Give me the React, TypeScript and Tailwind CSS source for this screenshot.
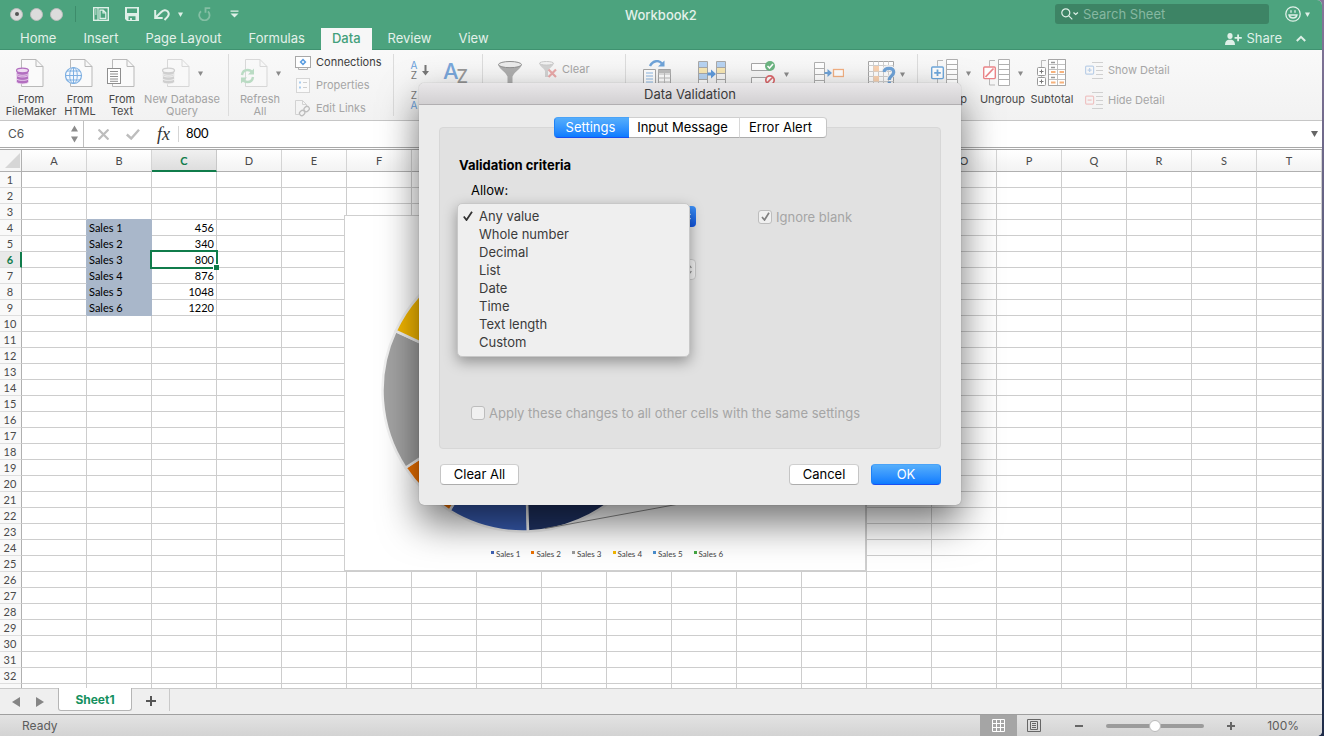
import React, { useState } from 'react';
import clsx from 'clsx';

const COLUMNS = 'ABCDEFGHIJKLMNOPQRST'.split('');
const ROWS = Array.from({ length: 32 }, (_, i) => i + 1);
const SALES: Record<number, number> = { 4: 456, 5: 340, 6: 800, 7: 876, 8: 1048, 9: 1220 };
const CRITERIA = ['Any value', 'Whole number', 'Decimal', 'List', 'Date', 'Time', 'Text length', 'Custom'];

function Caret({ className = 'text-[#8a8a8a]' }: { className?: string }) {
  return (
    <svg width="5" height="5" viewBox="0 0 5 5" className={clsx('shrink-0', className)}>
      <path d="M0 0.5h5L2.5 5z" fill="currentColor" />
    </svg>
  );
}

/* ---------- Title bar ---------- */

function TrafficLight({ dot }: { dot?: boolean }) {
  return (
    <span className="flex size-[13px] items-center justify-center rounded-full border border-[#bcbcbc] bg-[#dcdcdc]">
      {dot && <span className="size-1 rounded-full bg-[#555]" />}
    </span>
  );
}

function TitleBar() {
  return (
    <div className="grid h-7 grid-cols-[1fr_auto_1fr] items-center">
      <div className="flex items-center pl-[10px]">
        <div className="flex gap-[7px]">
          <TrafficLight dot />
          <TrafficLight />
          <TrafficLight />
        </div>
        <span className="ml-3 h-4 w-px bg-[#3d8c6b]" />
        <div className="ml-[17px] flex items-center text-[#dff0e8]">
          <button aria-label="Gallery">
            <svg width="16" height="14" viewBox="0 0 16 14" fill="none" stroke="currentColor" strokeWidth="1.4">
              <rect x="0.7" y="0.7" width="14.6" height="12.6" />
              <path d="M5 1v12M2 3h1.6M2 5h1.6M2 7h1.6" strokeWidth="1.1" />
              <path d="M7 3.2h3.2l2.6 2.6v5.5H7zM10 3.2v2.8h2.8" strokeWidth="1.2" />
            </svg>
          </button>
          <button aria-label="Save" className="ml-4">
            <svg width="14" height="14" viewBox="0 0 14 14">
              <path d="M0 0h14v14H2l-2-2zM2 1.5V6h10V1.5zM3.5 9.3V13h1.6v-2h1.8v2h3.6V9.3z" fill="currentColor" fillRule="evenodd" />
            </svg>
          </button>
          <button aria-label="Undo" className="ml-[15px]">
            <svg width="16" height="13" viewBox="0 0 16 13" fill="none" stroke="currentColor" strokeWidth="2">
              <path d="M1.200 2v8h7.500M1.800 9.400L7 4.200C9.300 1.800 12 1.600 13.700 3.400c1.600 2 1 4.400-.7 6L10.500 12" />
            </svg>
          </button>
          <span className="ml-2"><Caret className="text-[#dff0e8]" /></span>
          <button aria-label="Redo" className="ml-[15px] text-[#84bfa4]">
            <svg width="13" height="14" viewBox="0 0 13 14" fill="none" stroke="currentColor" strokeWidth="1.8">
              <path d="M3 4.200A5.200 5.200 0 1 0 10 4.400M7.500 5.800V1.200h4.700" />
            </svg>
          </button>
          <button aria-label="Customize toolbar" className="ml-[19px]">
            <svg width="9" height="8" viewBox="0 0 9 8" fill="currentColor">
              <path d="M0.5 0.5h8v1.3h-8zM0.5 3.500h8L4.500 7.500z" />
            </svg>
          </button>
        </div>
      </div>
      <h1 className="pt-1 text-[13px] font-medium text-[#e3f1ea]">Workbook2</h1>
      <div className="flex items-center justify-end pr-3">
        <label className="flex h-5 w-[214px] items-center rounded-[3px] bg-[#3d8465] pl-[6px] text-[#dff0e8]">
          <svg width="18" height="12" viewBox="0 0 18 12" fill="none" stroke="currentColor" strokeWidth="1.2" className="shrink-0">
            <circle cx="4.8" cy="4.8" r="4" />
            <path d="M7.8 7.8l3.5 3.5M12.5 4.5l2.200 2 2.200-2" />
          </svg>
          <input
            aria-label="Search Sheet"
            placeholder="Search Sheet"
            className="ml-1 w-full bg-transparent pt-[2px] text-[13px] outline-none placeholder:text-[#86b8a1]"
          />
        </label>
        <button aria-label="Feedback" className="ml-4 flex items-center gap-1 text-[#dff0e8]">
          <svg width="16" height="16" viewBox="0 0 16 16" fill="none" stroke="currentColor" strokeWidth="1.3">
            <circle cx="8" cy="8" r="7.2" />
            <path d="M4 9c.4 2 2 3 4 3s3.600-1 4-3zM6 4.200v2.600M10 4.200v2.600" />
          </svg>
          <Caret className="text-[#dff0e8]" />
        </button>
      </div>
    </div>
  );
}

function RibbonTabs() {
  return (
    <div className="flex h-[22px] items-center justify-between border-b border-[#3f9270] pr-4 pl-[7px]">
      <nav className="flex h-[22px] gap-px text-[13px] text-[#e3f1ea]">
        {['Home', 'Insert', 'Page Layout', 'Formulas', 'Data', 'Review', 'View'].map((tab) => (
          <button
            key={tab}
            className={clsx(
              'h-[22px]',
              tab === 'Data' ? 'mx-[2px] bg-[#f7f7f7] px-[11px] font-medium text-[#43a07b]' : 'px-[13px]',
            )}
          >
            {tab}
          </button>
        ))}
      </nav>
      <div className="flex items-center text-[#dff0e8]">
        <button className="flex items-center gap-1 text-[13px]">
          <svg width="17" height="12" viewBox="0 0 17 12" fill="currentColor">
            <ellipse cx="5" cy="3" rx="2.600" ry="3" />
            <path d="M0 12c0-3.500 1.500-4.800 3.500-5.200h3c2 .4 3.500 1.700 3.500 5.200zM12.200 1.500h1.800V4h2.800v1.700H14v2.600h-1.800V5.700H9.600V4h2.600z" />
          </svg>
          Share
        </button>
        <button aria-label="Collapse ribbon" className="ml-[14px]">
          <svg width="10" height="7" viewBox="0 0 10 7" fill="none" stroke="currentColor" strokeWidth="2">
            <path d="M0.800 6L5 1.800 9.200 6" />
          </svg>
        </button>
      </div>
    </div>
  );
}

/* ---------- Ribbon icons ---------- */

function Page() {
  return <path d="M5.500 .5H20l7 7v20H5.500zM20 .5v7h7" fill="#fafafa" stroke="#b9b9b9" />;
}

function Database({ color, edge }: { color: string; edge: string }) {
  return (
    <g fill={color} stroke={edge} strokeWidth="0.900">
      {[20, 16.500, 13].map((y) => (
        <path key={y} d={`M.5 ${y}v2.600c0 1.500 2.600 2.300 6 2.300s6-.8 6-2.300V${y}z`} />
      ))}
      <path d="M.5 12v2c0 1.400 2.600 2.300 6 2.300s6-.9 6-2.300v-2z" />
      <ellipse cx="6.500" cy="11.500" rx="6" ry="2.300" stroke={color} fill={edge} strokeWidth="1.300" />
    </g>
  );
}

function FileMakerIcon() {
  return (
    <svg width="28" height="28" viewBox="0 0 28 28" fill="none">
      <Page />
      <Database color="#b36fc0" edge="#efdcf2" />
    </svg>
  );
}

function HtmlIcon() {
  return (
    <svg width="28" height="28" viewBox="0 0 28 28" fill="none">
      <Page />
      <circle cx="8.500" cy="16.500" r="8" fill="#f4f8fd" stroke="#7fb0e2" strokeWidth="1.200" />
      <ellipse cx="8.500" cy="16.500" rx="3.800" ry="8" stroke="#7fb0e2" />
      <path d="M8.500 8.500v16M.5 16.500h16M2 12h13M2 21h13" stroke="#7fb0e2" />
    </svg>
  );
}

function TextIcon() {
  return (
    <svg width="28" height="28" viewBox="0 0 28 28" fill="none">
      <Page />
      <rect x=".5" y="9.500" width="13" height="15" fill="#fff" stroke="#8e8e8e" />
      <path d="M3 12.500h8M3 15h8M3 17.500h8M3 20h8M3 22.300h8" stroke="#8e8e8e" />
    </svg>
  );
}

function QueryIcon() {
  return (
    <svg width="28" height="28" viewBox="0 0 28 28" fill="none" opacity=".5">
      <Page />
      <Database color="#a9a9a9" edge="#f4f4f4" />
    </svg>
  );
}

function RefreshIcon() {
  return (
    <svg width="28" height="28" viewBox="0 0 28 28" fill="none" opacity=".5">
      <Page />
      <path d="M2 16c.5-3.500 3-5 5.500-5 2 0 3.800.8 5 2.500M13 18c-.5 3.500-3 5-5.500 5-2 0-3.800-.8-5-2.500" stroke="#7fc292" strokeWidth="2.400" />
      <path d="M14 9.500v6H8zM1 24.500v-6h6z" fill="#7fc292" />
    </svg>
  );
}

function ConnectionsIcon() {
  return (
    <svg width="16" height="14" viewBox="0 0 16 14" fill="none">
      <path d="M3.500 11.500v2h9v-2" stroke="#b0b0b0" />
      <rect x=".5" y=".5" width="15" height="11" fill="#fff" stroke="#a8a8a8" />
      <rect x="6.300" y="4.300" width="3.400" height="3.400" transform="rotate(45 8 6)" stroke="#5a9de0" strokeWidth="1.500" />
    </svg>
  );
}

function PropertiesIcon() {
  return (
    <svg width="14" height="15" viewBox="0 0 14 15" fill="none">
      <rect x=".5" y=".5" width="13" height="14" fill="#fafafa" stroke="#d6d6d6" />
      <path d="M3 4.500h2M3 9.500h2" stroke="#a9cdf0" strokeWidth="2" />
      <path d="M7 4.500h4M7 9.500h4" stroke="#cfcfcf" />
    </svg>
  );
}

function EditLinksIcon() {
  return (
    <svg width="16" height="17" viewBox="0 0 16 17" fill="none">
      <path d="M4 14.500H.5V.5h7l4 4V6M7.500.5v4h4" stroke="#d2d2d2" />
      <rect x="9.500" y="6.500" width="4.500" height="5.500" rx="2.200" transform="rotate(45 12 9)" stroke="#bdbdbd" strokeWidth="1.300" />
      <rect x="5" y="10.500" width="4.500" height="5.500" rx="2.200" transform="rotate(45 7.500 13)" stroke="#bdbdbd" strokeWidth="1.300" />
    </svg>
  );
}

function FunnelIcon() {
  return (
    <svg width="24" height="28" viewBox="0 0 24 28">
      <path d="M0 3.500C2 9 7 10 9.500 15.500V28h5V15.500C17 10 22 9 24 3.500z" fill="#aeaeae" />
      <ellipse cx="12" cy="3.600" rx="11.500" ry="3.100" fill="#ececec" stroke="#8f8f8f" />
    </svg>
  );
}

function ClearIcon() {
  return (
    <svg width="18" height="17" viewBox="0 0 18 17">
      <path d="M0 2C1 6 4.500 6.500 6 10v6h3v-6c1.500-3.500 5-4 6-8z" fill="#d3d3d3" />
      <ellipse cx="7.500" cy="2.300" rx="7" ry="1.800" fill="#f2f2f2" stroke="#cacaca" />
      <path d="M9.500 8.500l7.500 7.500M17 8.500L9.500 16" stroke="#eaa9a9" strokeWidth="2.200" />
    </svg>
  );
}

function TextToColumnsIcon() {
  return (
    <svg width="28" height="30" viewBox="0 0 28 30" fill="none">
      <path d="M7 6C10 0 16 0 19 3.500" stroke="#6fa3d8" strokeWidth="2.400" />
      <path d="M21.500.5v6h-6.500z" fill="#6fa3d8" />
      <path d="M.5 9.500h12v20H.5z" fill="#fff" stroke="#a6a6a6" />
      <path d="M3 13h7M3 16h7M3 19h7M3 22h7" stroke="#8db9e6" />
      <path d="M15.500 9.500h12v20h-12z" fill="#fff" stroke="#a6a6a6" />
      <path d="M15.500 10h12v3h-12z" fill="#bdbdbd" />
      <path d="M21.500 10v20M15.500 14h12M15.500 18h12M15.500 22h12" stroke="#bdbdbd" />
    </svg>
  );
}

function RemoveDuplicatesIcon() {
  return (
    <svg width="28" height="28" viewBox="0 0 28 28" fill="none">
      <path d="M.5.5h9v27h-9z" fill="#fff" />
      <path d="M1 1h8.500v6H1zM1 13h8.500v6H1z" fill="#b7d3f2" />
      <path d="M1 7h8.500v6H1zM18.500 7h9v6h-9z" fill="#f8e8b4" />
      <path d="M18.500 1h9v6h-9z" fill="#b7d3f2" />
      <path d="M.5.5h9v27h-9zM18.500.5h9v27h-9zM.5 6.500h9M.5 12.500h9M.5 18.500h9M18.500 6.500h9M18.500 12.500h9M18.500 18.500h9" stroke="#a9a9a9" />
      <path d="M9.500 11.500h3.500v-3l5 4.500-5 4.500v-3H9.500z" fill="#5f9bdc" />
    </svg>
  );
}

function ValidationIcon() {
  return (
    <svg width="25" height="28" viewBox="0 0 25 28" fill="none">
      <path d="M.5 3.500h18v7H.5zM.5 17.500h18v7H.5z" fill="#fff" stroke="#a6a6a6" />
      <circle cx="19" cy="6" r="5" fill="#6cb582" />
      <path d="M16.500 6l2 2 3.500-4" stroke="#fff" strokeWidth="1.600" />
      <circle cx="19" cy="20" r="4.200" fill="#fff" stroke="#dd6a6e" strokeWidth="1.700" />
      <path d="M16 23l6-6" stroke="#dd6a6e" strokeWidth="1.700" />
    </svg>
  );
}

function ConsolidateIcon() {
  return (
    <svg width="30" height="28" viewBox="0 0 30 28" fill="none">
      <path d="M.5 2.500h10v25H.5zM.5 8.500h10M.5 14.500h10M.5 20.500h10" fill="#fff" stroke="#b0b0b0" />
      <path d="M10.500 12h3V9l4.500 4-4.500 4v-3h-3z" fill="#6fa3d8" />
      <rect x="19.500" y="9.500" width="10" height="7" fill="#fff" stroke="#f4b183" strokeWidth="1.300" />
    </svg>
  );
}

function WhatIfIcon() {
  return (
    <svg width="28" height="28" viewBox="0 0 28 28" fill="none">
      <path d="M.5 1.500h25v26H.5z" fill="#fff" stroke="#a6a6a6" />
      <path d="M.5 5.500h25M.5 11.500h25M.5 16.500h25M.5 21.500h25M5.500 1.500v26M10.500 1.500v26M15.500 1.500v26M20.500 1.500v26" stroke="#d0d0d0" />
      <path d="M5.500 6h5.500v5.500H5.500zM5.500 16h5.500v5.500H5.500z" fill="#fbd3b2" />
      <path d="M16 11.500C16.500 8.500 19 7.800 21 7.800c3 0 4.700 1.700 4.700 4 0 3.600-4.400 3.600-4.400 7.200v1" stroke="#f4f4f4" strokeWidth="5" />
      <path d="M16 12C16.500 9 19 8.300 21 8.300c3 0 4.700 1.700 4.700 4 0 3.600-4.400 3.600-4.400 7v.7M21.300 21.500v3" stroke="#6fa3d8" strokeWidth="3.200" />
    </svg>
  );
}

function GroupIcon({ ungroup }: { ungroup?: boolean }) {
  return (
    <svg width="27" height="28" viewBox="0 0 27 28" fill="none">
      <path d="M12 1.500H6.500v6M6.500 20v6H12" stroke="#b9b9b9" />
      <path d="M15.500.5h11v26h-11zM15.500 5.500h11M15.500 10.500h11M15.500 15.500h11M15.500 20.500h11" fill="#fff" stroke="#b0b0b0" />
      <rect x=".7" y="8" width="11.600" height="11.600" rx="1" fill="#fff" stroke={ungroup ? '#ea8488' : '#6fa8dc'} strokeWidth="1.400" />
      <path d={ungroup ? 'M2.500 18l8-8.500' : 'M6.500 10.500v6.600M3.200 13.800h6.600'} stroke={ungroup ? '#ea8488' : '#6fa8dc'} strokeWidth="1.800" />
    </svg>
  );
}

function SubtotalIcon() {
  return (
    <svg width="29" height="28" viewBox="0 0 29 28" fill="none">
      <path d="M9 1.500H4.500V8M4.500 17v1" stroke="#b9b9b9" />
      <path d="M11.500.5h17v26h-17zM11.500 5.500h17M11.500 10.500h17M11.500 15.500h17M11.500 20.500h17M20.500.5v26" fill="#fff" stroke="#c0c0c0" />
      <path d="M11.500.5h17v26h-17z" stroke="#a6a6a6" />
      <path d="M14 3.500h4M14 8.500h4M14 18.500h4" stroke="#999" strokeWidth="1.400" />
      <path d="M14 13h4.500M22.500 13H27M14 23.500h4.500M22.500 23.500H27" stroke="#f6b27c" strokeWidth="2.200" />
      <rect x=".5" y="8.500" width="8" height="8" rx="1" fill="#fff" stroke="#999" />
      <rect x=".5" y="18.500" width="8" height="8" rx="1" fill="#fff" stroke="#999" />
      <path d="M2.500 12.500h4M4.500 10.500v4M2.500 22.500h4M4.500 20.500v4" stroke="#777" />
    </svg>
  );
}

function DetailIcon({ hide }: { hide?: boolean }) {
  const color = hide ? '#efc3c3' : '#bcd0e8';
  return (
    <svg width="18" height="17" viewBox="0 0 18 17" fill="none">
      <path d="M7 .5h11M11 4.500h7M11 8.500h7M11 12.500h7M7 16.500h11" stroke="#d0d0d0" />
      <rect x=".6" y="4.100" width="8" height="8" rx="1" stroke={color} strokeWidth="1.200" />
      <path d={hide ? 'M2.600 8.100h4' : 'M2.600 8.100h4M4.600 6.100v4'} stroke={color} strokeWidth="1.300" />
    </svg>
  );
}

/* ---------- Ribbon ---------- */

function BigButton({
  icon, label, caret, muted, className,
}: { icon: React.ReactNode; label?: string; caret?: boolean; muted?: boolean; className: string }) {
  return (
    <button className={clsx('flex shrink-0 flex-col items-center text-[11px] leading-3', muted ? 'text-[#a3a3a3]' : 'text-[#484848]', className)}>
      <span className={clsx('flex h-[30px] items-center gap-2', !caret && 'pr-[2px]')}>
        {icon}
        {caret && <Caret />}
      </span>
      <span className="mt-[5px] whitespace-pre-line">{label}</span>
    </button>
  );
}

function SmallButton({ icon, label, muted }: { icon: React.ReactNode; label: string; muted?: boolean }) {
  return (
    <button className={clsx('flex h-[17px] items-center gap-[5px] text-[11px]', muted ? 'text-[#a6a6a6]' : 'text-[#3c3c3c]')}>
      <span className="flex min-w-4 justify-center">{icon}</span>
      {label}
    </button>
  );
}

function Separator() {
  return <span className="h-[62px] w-px shrink-0 bg-[#dcdcdc]" />;
}

function SortButton({ first, second }: { first: string; second: string }) {
  const tone = (c: string) => (c === 'A' ? 'text-[#6a9fdb]' : 'text-[#777]');
  return (
    <button className="flex items-center gap-1" aria-label={`Sort ${first} to ${second}`}>
      <span className="flex w-2 flex-col text-[10px] leading-[10px]">
        <span className={tone(first)}>{first}</span>
        <span className={tone(second)}>{second}</span>
      </span>
      <svg width="7" height="11" viewBox="0 0 7 11" fill="#777">
        <path d="M2.500 0h2v6H7l-3.500 4.500L0 6h2.500z" />
      </svg>
    </button>
  );
}

function Ribbon() {
  return (
    <div className="flex h-[71px] items-start overflow-hidden border-b border-[#c6c6c6] bg-linear-to-b from-[#f9f9f9] to-[#f2f2f2] pt-1">
      <div className="flex shrink-0 pt-1 pr-1 pl-[6px]">
        <BigButton className="w-[50px]" icon={<FileMakerIcon />} label={'From\nFileMaker'} />
        <BigButton className="w-12" icon={<HtmlIcon />} label={'From\nHTML'} />
        <BigButton className="w-9" icon={<TextIcon />} label={'From\nText'} />
        <BigButton className="w-[84px]" icon={<QueryIcon />} label={'New Database\nQuery'} caret muted />
      </div>
      <Separator />
      <div className="flex w-[164px] shrink-0">
        <div className="pt-1">
          <BigButton className="w-[62px]" icon={<RefreshIcon />} label={'Refresh\nAll'} caret muted />
        </div>
        <div className="ml-1 flex flex-col gap-[6px]">
          <SmallButton icon={<ConnectionsIcon />} label="Connections" />
          <SmallButton icon={<PropertiesIcon />} label="Properties" muted />
          <SmallButton icon={<EditLinksIcon />} label="Edit Links" muted />
        </div>
      </div>
      <Separator />
      <div className="flex w-[88px] shrink-0 pt-[6px] pl-4">
        <div className="flex flex-col gap-[10px]">
          <SortButton first="A" second="Z" />
          <SortButton first="Z" second="A" />
        </div>
        <button aria-label="Sort" className="ml-[14px] flex h-7 items-start text-[22px] leading-[22px] font-medium">
          <span className="text-[#7aa7db]">A</span>
          <span className="-ml-[2px] pt-2 text-lg leading-[18px] text-[#999]">Z</span>
        </button>
      </div>
      <Separator />
      <div className="flex w-[142px] shrink-0 items-start pt-[7px] pl-[15px]">
        <button aria-label="Filter"><FunnelIcon /></button>
        <button className="ml-[17px] flex items-center gap-[5px] text-[11px] text-[#a6a6a6]">
          <ClearIcon />
          Clear
        </button>
      </div>
      <Separator />
      <div className="flex w-[291px] shrink-0 items-start pt-[6px] pl-[17px]">
        <button aria-label="Text to Columns" className="w-[55px]"><TextToColumnsIcon /></button>
        <button aria-label="Remove Duplicates" className="w-[53px] pt-px"><RemoveDuplicatesIcon /></button>
        <button aria-label="Data Validation" className="flex w-[63px] items-center gap-2"><ValidationIcon /><Caret /></button>
        <button aria-label="Consolidate" className="w-[54px]"><ConsolidateIcon /></button>
        <button aria-label="What-If Analysis" className="flex items-center gap-1"><WhatIfIcon /><Caret /></button>
      </div>
      <Separator />
      <div className="flex shrink-0 pt-1 pl-[6px]">
        <BigButton className="w-[54px]" icon={<GroupIcon />} label="Group" caret />
        <BigButton className="w-[49px]" icon={<GroupIcon ungroup />} label="Ungroup" caret />
        <BigButton className="w-[50px]" icon={<SubtotalIcon />} label="Subtotal" />
        <div className="ml-2 flex flex-col gap-[13px] pt-1">
          <SmallButton icon={<DetailIcon />} label="Show Detail" muted />
          <SmallButton icon={<DetailIcon hide />} label="Hide Detail" muted />
        </div>
      </div>
    </div>
  );
}

/* ---------- Formula bar ---------- */

function FormulaBar() {
  return (
    <div className="flex h-[29px] items-start border-b border-[#a9a9a9] bg-white">
      <div className="flex h-[27px] w-full items-center border-b border-[#a9a9a9]">
        <div className="flex h-full w-[84px] items-center justify-between border-r border-[#c0c0c0] pr-[5px] pl-2">
          <input aria-label="Name box" defaultValue="C6" className="w-12 bg-transparent text-xs text-[#555] outline-none" />
          <svg width="7" height="18" viewBox="0 0 7 18" fill="#8c8c8c">
            <path d="M0 6.500h7L3.500.5zM0 11.500h7L3.500 17.500z" />
          </svg>
        </div>
        <button aria-label="Cancel entry" className="ml-[14px]">
          <svg width="11" height="11" viewBox="0 0 11 11" stroke="#bdbdbd" strokeWidth="2.200"><path d="M.5.5l10 10M10.500.5l-10 10" /></svg>
        </button>
        <button aria-label="Confirm entry" className="ml-[17px]">
          <svg width="14" height="11" viewBox="0 0 14 11" fill="none" stroke="#bdbdbd" strokeWidth="2.400"><path d="M.8 5.500l4.400 4L13 .8" /></svg>
        </button>
        <button aria-label="Insert function" className="ml-[17px] flex w-[22px] border-r border-[#d5d5d5] font-['Liberation_Serif',serif] text-lg leading-4 text-[#333] italic">
          fx
        </button>
        <input aria-label="Formula" defaultValue="800" className="ml-[7px] flex-1 bg-transparent font-[Lato,sans-serif] text-[13px] text-black outline-none" />
        <button aria-label="Expand formula bar" className="mr-[4px]">
          <svg width="7" height="6" viewBox="0 0 7 6" fill="#666"><path d="M0 0h7L3.500 6z" /></svg>
        </button>
      </div>
    </div>
  );
}

/* ---------- Sheet ---------- */

function Cell({ column, row }: { column: string; row: number }) {
  const inSales = row in SALES;
  const filled = column === 'B' && inSales;
  const active = column === 'C' && row === 6;
  return (
    <td
      className={clsx(
        'border-r border-b p-0 text-black',
        filled && 'border-[#a9b7ca] bg-[#a9b7ca] pl-[2px] text-left',
        column === 'A' && inSales && 'border-r-[#a9b7ca] border-b-[#cdcdcd]',
        column === 'B' && row === 3 && 'border-r-[#cdcdcd] border-b-[#a9b7ca]',
        !filled && !(column === 'A' && inSales) && !(column === 'B' && row === 3) && 'border-[#cdcdcd]',
        column === 'C' && 'pr-[2px] text-right',
        active && 'relative',
      )}
    >
      {filled && `Sales ${row - 3}`}
      {column === 'C' && SALES[row]}
      {active && (
        <span className="pointer-events-none absolute -inset-[2px] border-2 border-[#107c4b]">
          <span className="absolute -right-[3px] -bottom-[3px] size-[6px] border-t border-l border-white bg-[#107c4b]" />
        </span>
      )}
    </td>
  );
}

function Grid() {
  return (
    <table className="w-full table-fixed border-separate border-spacing-0 font-[Lato,sans-serif] text-[11px] leading-[15px]">
      <colgroup>
        <col className="w-[22px]" />
        {COLUMNS.map((c) => <col key={c} />)}
      </colgroup>
      <thead>
        <tr className="h-[22px]">
          <th className="border-r border-b border-[#b0b0b0] bg-[#f6f6f6] p-0">
            <svg width="16" height="15" viewBox="0 0 16 15" className="ml-auto"><path d="M15 0v15H0z" fill="#d6d6d6" /></svg>
          </th>
          {COLUMNS.map((c) => (
            <th
              key={c}
              scope="col"
              className={clsx(
                'border-r p-0',
                c === 'C'
                  ? 'border-b-2 border-r-[#c8c8c8] border-b-[#107c4b] bg-linear-to-b from-[#f0f0f0] to-[#dedede] font-bold text-[#107c4b]'
                  : 'border-b border-r-[#d4d4d4] border-b-[#b0b0b0] bg-linear-to-b from-white to-[#f3f3f3] font-normal text-[#4a4a4a]',
              )}
            >
              {c}
            </th>
          ))}
        </tr>
      </thead>
      <tbody>
        {ROWS.map((row) => (
          <tr key={row} className="h-4">
            <th
              scope="row"
              className={clsx(
                'border-b border-b-[#dedede] p-0',
                row === 6
                  ? 'border-r-2 border-r-[#107c4b] bg-[#e9e9e9] font-bold text-[#107c4b]'
                  : 'border-r border-r-[#b0b0b0] bg-[#f9f9f9] pr-px font-normal text-[#4a4a4a]',
              )}
            >
              {row}
            </th>
            {COLUMNS.map((c) => <Cell key={c} column={c} row={row} />)}
          </tr>
        ))}
        <tr className="h-4">
          <td className="border-r border-r-[#b0b0b0] bg-[#f9f9f9] p-0" />
          {COLUMNS.map((c) => <td key={c} className="border-r border-[#cdcdcd] p-0" />)}
        </tr>
      </tbody>
    </table>
  );
}

function SalesChart() {
  const legend = [
    ['Sales 1', 'bg-[#3f62b5]'],
    ['Sales 2', 'bg-[#ed7100]'],
    ['Sales 3', 'bg-[#9b9b9b]'],
    ['Sales 4', 'bg-[#f5b800]'],
    ['Sales 5', 'bg-[#4a8fd0]'],
    ['Sales 6', 'bg-[#44a843]'],
  ];
  return (
    <figure className="absolute top-[65px] left-[344px] flex h-[356px] w-[522px] flex-col justify-between border border-[#cfcfcf] bg-white">
      <svg width="520" height="324" viewBox="345 216 520 324" className="block">
        <g stroke="#f1f1f1" strokeWidth="2.500" strokeLinejoin="round">
          <path d="M523.500 390.500L449.500 510.500A141 141 0 0 0 528 531.400z" fill="#3659ad" />
          <path d="M523.500 390.500L528 531.400A141 141 0 0 0 664.500 390.500z" fill="#1f3263" />
          <path d="M523.500 390.500L405.500 467.700A141 141 0 0 0 449.500 510.500z" fill="#ed7100" />
          <path d="M523.500 390.500L395.700 331A141 141 0 0 0 405.500 467.700z" fill="#a3a3a3" />
          <path d="M523.500 390.500L523.500 249.500A141 141 0 0 0 395.700 331z" fill="#f5b800" />
          <path d="M523.500 390.500L664.500 390.500A141 141 0 0 0 523.500 249.500z" fill="#4a8fd0" />
        </g>
        <path d="M545 528.500L690 502" stroke="#8a8a8a" fill="none" />
      </svg>
      <figcaption className="mb-[11px] flex items-center justify-center gap-[11px] pl-1 font-[Lato,sans-serif] text-[8px] leading-[10px] text-[#444]">
        {legend.map(([name, color]) => (
          <span key={name} className="flex gap-[2px]">
            <span className={clsx('mt-[2px] size-[3px]', color)} />
            {name}
          </span>
        ))}
      </figcaption>
    </figure>
  );
}

/* ---------- Footer ---------- */

function SheetTabs() {
  return (
    <div className="flex h-[26px] shrink-0 items-start border-t border-[#c9c9c9] bg-[#efefef]">
      <div className="flex h-[26px] items-center gap-4 pl-3">
        <button aria-label="Previous sheet"><svg width="8" height="10" viewBox="0 0 8 10" fill="#858585"><path d="M8 0v10L0 5z" /></svg></button>
        <button aria-label="Next sheet"><svg width="8" height="10" viewBox="0 0 8 10" fill="#858585"><path d="M0 0v10l8-5z" /></svg></button>
      </div>
      <button className="-mt-px ml-[14px] h-[23px] w-[74px] rounded-b-[3px] border border-t-0 border-[#b5b5b5] bg-white pt-[2px] text-xs font-bold text-[#159160]">
        Sheet1
      </button>
      <button aria-label="Add sheet" className="flex h-[22px] w-[38px] items-center justify-center border-r border-[#c9c9c9] pt-[2px]">
        <svg width="10" height="10" viewBox="0 0 10 10" stroke="#555" strokeWidth="2"><path d="M5 0v10M0 5h10" /></svg>
      </button>
    </div>
  );
}

function StatusBar() {
  return (
    <div className="flex h-[22px] shrink-0 items-center justify-between border-t border-[#9f9f9f] bg-linear-to-b from-[#e3e3e3] to-[#d3d3d3] pl-[22px] text-xs text-[#5c5c5c]">
      <span className="pt-px">Ready</span>
      <div className="flex items-center pr-[23px]">
        <button aria-label="Normal view" className="flex h-[21px] w-[37px] items-center justify-center bg-[#a5a5a5]">
          <svg width="13" height="13" viewBox="0 0 13 13" fill="none" stroke="#fff"><path d="M.5.5h12v12H.5zM.5 4.500h12M.5 8.500h12M4.500.5v12M8.500.5v12" /></svg>
        </button>
        <button aria-label="Page layout view" className="ml-[10px]">
          <svg width="14" height="13" viewBox="0 0 14 13" fill="none" stroke="#666"><path d="M.5.5h13v12H.5zM3.500 2.500h7v8h-7zM5 4.500h4M5 6.500h4M5 8.500h4" /></svg>
        </button>
        <button aria-label="Zoom out" className="ml-[34px]">
          <svg width="8" height="8" viewBox="0 0 8 8" stroke="#666" strokeWidth="2"><path d="M0 4h8" /></svg>
        </button>
        <input
          type="range"
          aria-label="Zoom"
          defaultValue={50}
          className="ml-[23px] h-1 w-[98px] appearance-none rounded-full bg-[#9b9b9b] [&::-webkit-slider-thumb]:size-3 [&::-webkit-slider-thumb]:appearance-none [&::-webkit-slider-thumb]:rounded-full [&::-webkit-slider-thumb]:border [&::-webkit-slider-thumb]:border-[#bbb] [&::-webkit-slider-thumb]:bg-white"
        />
        <button aria-label="Zoom in" className="ml-[23px]">
          <svg width="8" height="8" viewBox="0 0 8 8" stroke="#666" strokeWidth="2"><path d="M0 4h8M4 0v8" /></svg>
        </button>
        <span className="w-16 pt-px text-right">100%</span>
      </div>
    </div>
  );
}

/* ---------- Dialog ---------- */

function PushButton({ children, primary, className }: { children: React.ReactNode; primary?: boolean; className: string }) {
  return (
    <button
      className={clsx(
        'h-[21px] rounded-[4px] border text-[13px] leading-[19px]',
        primary
          ? 'border-t-[#4aa3f8] border-r-[#1f82f6] border-b-[#1a4ff0] border-l-[#1f82f6] bg-linear-to-b from-[#55aefb] to-[#0a7bff] text-white'
          : 'border-t-[#cfcfcf] border-r-[#c5c5c5] border-b-[#adadad] border-l-[#c5c5c5] bg-white text-black',
        className,
      )}
    >
      {children}
    </button>
  );
}

function UpDown() {
  return (
    <svg width="6" height="11" viewBox="0 0 6 11" fill="none" stroke="currentColor" strokeWidth="1.300">
      <path d="M.6 3.800L3 1l2.400 2.800M.6 7.200L3 10l2.400-2.800" />
    </svg>
  );
}

function Segments() {
  return (
    <div className="flex h-[21px] self-center text-[13px] leading-[19px]">
      <button className="w-[75px] rounded-l-[4px] border border-t-[#4aa3f8] border-r-0 border-b-[#1a4ff0] border-l-[#1f82f6] bg-linear-to-b from-[#55aefb] to-[#0a7bff] pr-[2px] text-white">Settings</button>
      <button className="w-[111px] border-y border-r border-t-[#cfcfcf] border-r-[#d8d8d8] border-b-[#adadad] bg-white pr-[2px] text-black">Input Message</button>
      <button className="w-[87px] rounded-r-[4px] border border-l-0 border-t-[#cfcfcf] border-r-[#c5c5c5] border-b-[#adadad] bg-white pr-1 text-black">Error Alert</button>
    </div>
  );
}

function CheckBox({ label, checked }: { label: string; checked?: boolean }) {
  return (
    <label className="flex items-center gap-1 text-[13px] leading-4 text-[#a5a5a5]">
      <span className="grid size-[14px] place-items-center">
        <input type="checkbox" disabled defaultChecked={checked} className="col-start-1 row-start-1 size-[14px] appearance-none rounded-[3px] border border-[#bdbdbd] bg-[#f0f0f0]" />
        {checked && (
          <svg width="9" height="9" viewBox="0 0 9 9" fill="none" stroke="#808080" strokeWidth="1.700" className="col-start-1 row-start-1">
            <path d="M1 5l2.500 3L8 .8" />
          </svg>
        )}
      </span>
      {label}
    </label>
  );
}

function ValidationDialog() {
  const [allow, setAllow] = useState('Any value');
  return (
    <section
      role="dialog"
      aria-label="Data Validation"
      className="absolute top-[83px] left-[419px] flex h-[422px] w-[542px] flex-col rounded-[5px] bg-[#ebebeb] shadow-[0_0_1px_rgba(0,0,0,0.4),0_18px_38px_rgba(0,0,0,0.55)]"
    >
      <h2 className="h-[22px] rounded-t-[5px] border-b border-[#b1afb1] bg-linear-to-b from-[#e9e7e9] to-[#d2d0d2] text-center text-[13px] leading-[22px] text-[#3a3a3a]">
        Data Validation
      </h2>
      <div className="flex flex-1 flex-col px-5 pt-3 pb-5">
        <div className="z-10 flex justify-center">
          <Segments />
        </div>
        <div className="-mt-[11px] flex h-[322px] flex-col rounded-[4px] border border-[#d7d7d7] bg-[#e1e1e1] pt-[29px] pr-5 pl-[19px]">
          <h3 className="text-[13px] leading-4 font-bold text-black">Validation criteria</h3>
          <label htmlFor="allow" className="mt-[9px] ml-3 text-[13px] leading-4 text-black">Allow:</label>
          <div className="mt-2 ml-3 flex items-center">
            <div className="relative w-[225px]">
              <select
                id="allow"
                value={allow}
                onChange={(e) => setAllow(e.target.value)}
                className="block h-[21px] w-full appearance-none rounded-[4px] border border-[#c5c5c5] bg-white pl-2 text-[13px] leading-[19px]"
              >
                {CRITERIA.map((c) => <option key={c}>{c}</option>)}
              </select>
              <span className="pointer-events-none absolute inset-y-0 right-0 flex w-4 items-center justify-center rounded-r-[4px] bg-linear-to-b from-[#3d8ff5] to-[#1253dc] text-white">
                <UpDown />
              </span>
              <ul className="absolute -top-[3px] -left-[14px] z-20 w-[233px] rounded-[5px] border border-[#c8c8c8] bg-[#efefef] pt-[3px] pb-[5px] text-[13px] leading-[18px] text-[#3b3b3b] shadow-[0_5px_14px_rgba(0,0,0,0.35)]">
                {CRITERIA.map((c) => (
                  <li key={c}>
                    <button onClick={() => setAllow(c)} className="flex h-[18px] w-full items-center pl-[5px]">
                      <span className="w-4">
                        {c === allow && (
                          <svg width="10" height="10" viewBox="0 0 10 10" fill="none" stroke="#333" strokeWidth="1.800"><path d="M.8 5.500l2.700 3.500L9 .8" /></svg>
                        )}
                      </span>
                      {c}
                    </button>
                  </li>
                ))}
              </ul>
            </div>
            <div className="ml-[62px]">
              <CheckBox label="Ignore blank" checked />
            </div>
          </div>
          <div className="relative mt-8 ml-3 w-[225px]">
            <select aria-label="Data" disabled className="block h-[21px] w-full appearance-none rounded-[4px] border border-[#c8c8c8] bg-[#f0f0f0] pl-2 text-[13px] leading-[19px] text-[#a5a5a5]">
              <option>between</option>
            </select>
            <span className="pointer-events-none absolute inset-y-0 right-1 flex items-center text-[#8d8d8d]">
              <UpDown />
            </span>
          </div>
          <div className="mt-[125px] ml-3">
            <CheckBox label="Apply these changes to all other cells with the same settings" />
          </div>
        </div>
        <div className="mt-[15px] flex pl-px">
          <PushButton className="w-[79px]">Clear All</PushButton>
          <PushButton className="ml-auto w-[70px]">Cancel</PushButton>
          <PushButton className="ml-3 w-[70px]" primary>OK</PushButton>
        </div>
      </div>
    </section>
  );
}

export default function App() {
  return (
    <div className="relative h-screen overflow-hidden bg-linear-to-b from-[#85769a] via-[#4d5573] to-[#1f2c49] pr-[2px] font-[Inter,sans-serif]">
      <main className="flex h-full flex-col overflow-hidden rounded-tr-[5px] rounded-br-[5px] bg-white">
        <header className="shrink-0">
          <div className="bg-[#4ca37e]">
            <TitleBar />
            <RibbonTabs />
          </div>
          <Ribbon />
          <FormulaBar />
        </header>
        <div className="relative min-h-0 flex-1 overflow-hidden">
          <Grid />
          <SalesChart />
        </div>
        <SheetTabs />
        <StatusBar />
      </main>
      <ValidationDialog />
    </div>
  );
}
